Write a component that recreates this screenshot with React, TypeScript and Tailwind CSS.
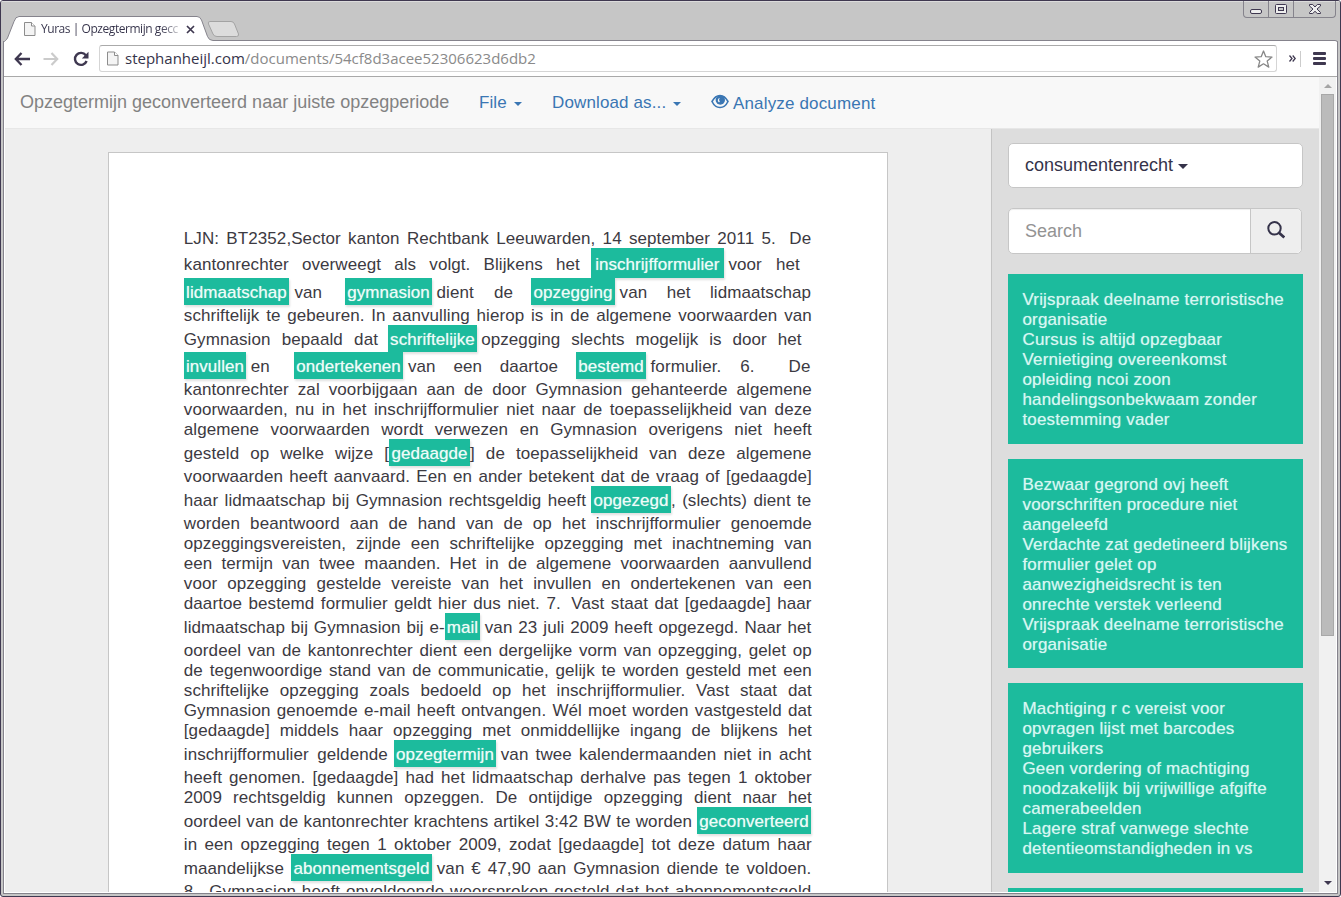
import React from "react";

type Segment = { gap?: number; width: number; text: string; mark?: boolean };
type Line = string | { height?: "tall" | "taller"; parts: Segment[] };

const FULL = 628;

const lines: Line[] = [
  { parts: [{ width: 592, text: "LJN: BT2352,Sector kanton Rechtbank Leeuwarden, 14 september 2011 5." }, { gap: 13.5, width: 23, text: "De" }] },
  { height: "taller", parts: [
    { width: 396, text: "kantonrechter overweegt als volgt. Blijkens het" },
    { gap: 11, width: 133, text: "inschrijfformulier", mark: true },
    { gap: 4.6, width: 71.4, text: "voor het" },
  ] },
  { height: "tall", parts: [
    { gap: 0.2, width: 105, text: "lidmaatschap", mark: true },
    { gap: 5.4, width: 28, text: "van" },
    { gap: 22.6, width: 87, text: "gymnasion", mark: true },
    { gap: 4.6, width: 76.4, text: "dient de" },
    { gap: 18, width: 84, text: "opzegging", mark: true },
    { gap: 4.6, width: 191.6, text: "van het lidmaatschap" },
  ] },
  "schriftelijk te gebeuren. In aanvulling hierop is in de algemene voorwaarden van",
  { height: "tall", parts: [
    { width: 194.2, text: "Gymnasion bepaald dat" },
    { gap: 10, width: 89, text: "schriftelijke", mark: true },
    { gap: 4.2, width: 320.4, text: "opzegging slechts mogelijk is door het" },
  ] },
  { height: "tall", parts: [
    { gap: 0.2, width: 62, text: "invullen", mark: true },
    { gap: 4.8, width: 20, text: "en" },
    { gap: 23.2, width: 109, text: "ondertekenen", mark: true },
    { gap: 5, width: 150, text: "van een daartoe" },
    { gap: 18, width: 70, text: "bestemd", mark: true },
    { gap: 4.6, width: 104, text: "formulier. 6." },
    { gap: 34, width: 23, text: "De" },
  ] },
  "kantonrechter zal voorbijgaan aan de door Gymnasion gehanteerde algemene",
  "voorwaarden, nu in het inschrijfformulier niet naar de toepasselijkheid van deze",
  "algemene voorwaarden wordt verwezen en Gymnasion overigens niet heeft",
  { height: "tall", parts: [
    { width: 205.2, text: "gesteld op welke wijze [" },
    { width: 81, text: "gedaagde", mark: true },
    { width: 341.6, text: "] de toepasselijkheid van deze algemene" },
  ] },
  "voorwaarden heeft aanvaard. Een en ander betekent dat de vraag of [gedaagde]",
  { height: "tall", parts: [
    { width: 402.2, text: "haar lidmaatschap bij Gymnasion rechtsgeldig heeft" },
    { gap: 5, width: 80, text: "opgezegd", mark: true },
    { width: 140.4, text: ", (slechts) dient te" },
  ] },
  "worden beantwoord aan de hand van de op het inschrijfformulier genoemde",
  "opzeggingsvereisten, zijnde een schriftelijke opzegging met inachtneming van",
  "een termijn van twee maanden. Het in de algemene voorwaarden aanvullend",
  "voor opzegging gestelde vereiste van het invullen en ondertekenen van een",
  { parts: [
    { width: 377, text: "daartoe bestemd formulier geldt hier dus niet. 7." },
    { gap: 10.5, width: 240.2, text: "Vast staat dat [gedaagde] haar" },
  ] },
  { height: "tall", parts: [
    { width: 261, text: "lidmaatschap bij Gymnasion bij e-" },
    { gap: 0.2, width: 35, text: "mail", mark: true },
    { gap: 4.8, width: 326.6, text: "van 23 juli 2009 heeft opgezegd. Naar het" },
  ] },
  "oordeel van de kantonrechter dient een dergelijke vorm van opzegging, gelet op",
  "de tegenwoordige stand van de communicatie, gelijk te worden gesteld met een",
  "schriftelijke opzegging zoals bedoeld op het inschrijfformulier. Vast staat dat",
  "Gymnasion genoemde e-mail heeft ontvangen. Wél moet worden vastgesteld dat",
  "[gedaagde] middels haar opzegging met onmiddellijke ingang de blijkens het",
  { height: "tall", parts: [
    { width: 204, text: "inschrijfformulier geldende" },
    { gap: 6.2, width: 102, text: "opzegtermijn", mark: true },
    { gap: 4.8, width: 310.6, text: "van twee kalendermaanden niet in acht" },
  ] },
  "heeft genomen. [gedaagde] had het lidmaatschap derhalve pas tegen 1 oktober",
  "2009 rechtsgeldig kunnen opzeggen. De ontijdige opzegging dient naar het",
  { height: "tall", parts: [
    { width: 508.2, text: "oordeel van de kantonrechter krachtens artikel 3:42 BW te worden" },
    { gap: 5, width: 114, text: "geconverteerd", mark: true },
  ] },
  "in een opzegging tegen 1 oktober 2009, zodat [gedaagde] tot deze datum haar",
  { height: "tall", parts: [
    { width: 101.2, text: "maandelijkse" },
    { gap: 6, width: 141, text: "abonnementsgeld", mark: true },
    { gap: 4.8, width: 374.6, text: "van € 47,90 aan Gymnasion diende te voldoen." },
  ] },
  { parts: [
    { width: 13, text: "8." },
    { gap: 12.5, width: 602, text: "Gymnasion heeft onvoldoende weersproken gesteld dat het abonnementsgeld" },
  ] },
];

const cards = [
  {
    height: 170,
    rows: ["Vrijspraak deelname terroristische", "organisatie", "Cursus is altijd opzegbaar", "Vernietiging overeenkomst", "opleiding ncoi zoon", "handelingsonbekwaam zonder", "toestemming vader"],
  },
  {
    height: 209,
    rows: ["Bezwaar gegrond ovj heeft", "voorschriften procedure niet", "aangeleefd", "Verdachte zat gedetineerd blijkens", "formulier gelet op", "aanwezigheidsrecht is ten", "onrechte verstek verleend", "Vrijspraak deelname terroristische", "organisatie"],
  },
  {
    height: 190,
    rows: ["Machtiging r c vereist voor", "opvragen lijst met barcodes", "gebruikers", "Geen vordering of machtiging", "noodzakelijk bij vrijwillige afgifte", "camerabeelden", "Lagere straf vanwege slechte", "detentieomstandigheden in vs"],
  },
  { height: 170, rows: [] },
];

function TextLine({ line }: { line: Line }) {
  const parts: Segment[] = typeof line === "string" ? [{ width: FULL, text: line }] : line.parts;
  const size = typeof line === "string" ? undefined : line.height;
  const box = size === "taller" ? "h-[30px] leading-[34px]" : size === "tall" ? "h-[27px] leading-[30px]" : "h-5 leading-[22px]";
  return (
    <div className={`flex shrink-0 whitespace-nowrap ${box}`}>
      {parts.map((p, i) => (
        <span
          key={i}
          className={
            p.mark
              ? "block shrink-0 bg-[#1cbb9d] text-center tracking-[0.05px] text-[#effcf8] shadow-[1px_2px_2px_rgba(0,0,0,0.12)] [text-shadow:0_0_1px_rgba(255,255,255,0.6)]"
              : "block shrink-0 [text-align-last:justify]"
          }
          style={{ width: p.width, marginLeft: p.gap ?? 0 }}
        >
          {p.text}
        </span>
      ))}
    </div>
  );
}

function PageIcon({ className }: { className: string }) {
  return (
    <svg className={className} viewBox="0 0 12 14" fill="none">
      <path d="M.5 .5h7L11 4v9.500H.5z" fill="#f4f4f4" stroke="#8d8d8d" />
      <path d="M7.500.5V4H11" fill="#fff" stroke="#8d8d8d" />
    </svg>
  );
}

function Caret({ className }: { className: string }) {
  return <span className={`inline-block border-x-4 border-t-4 border-x-transparent ${className}`} />;
}

function TitleBar() {
  return (
    <div className="relative flex h-10 shrink-0 border-t border-[#dcdcdc] bg-[#c6c6c6]">
      <svg className="absolute -top-px left-0" width="1339" height="41" viewBox="1 1 1339 41" fill="none">
        <path d="M4 42.500C4 41 6 41 7.500 38L14 21.500Q15.500 16.500 19 16.500H197Q200 16.500 201.500 20L207.500 36.500Q209 40.500 213 40.500H1335Q1337.500 40.500 1337.500 42.500V43H4z" fill="#fff" stroke="#85838c" />
        <path d="M210 21.500H231Q233.500 21.500 234.500 24L238.500 34Q239 36.500 236.500 36.500H217Q214 36.500 213 34L208.500 24Q207.500 21.500 210 21.500z" fill="#dcdcdc" stroke="#a3a3a3" />
      </svg>
      <div className="relative mt-[15px] ml-[23px] flex h-6 w-[176px] items-center">
        <PageIcon className="h-[14px] w-3 shrink-0" />
        <span className="ml-[5px] w-[140px] shrink-0 bg-gradient-to-r from-[#35334a] from-85% to-[#e4e4e4] bg-clip-text font-['Open_Sans','Noto_Sans',sans-serif] text-[12px] tracking-[-0.45px] whitespace-nowrap text-transparent">
          Yuras | Opzegtermijn gecc
        </span>
        <svg className="ml-[5px] h-[9px] w-[9px]" viewBox="0 0 9 9">
          <path d="M1 1l7 7M8 1L1 8" stroke="#3f3850" strokeWidth="1.700" />
        </svg>
      </div>
      <div className="relative -mt-px mr-[4px] ml-auto flex h-[17px] rounded-b-[4px] border-x border-b border-[#85838c]">
        <span className="flex w-[24px] items-center justify-center">
          <svg width="13" height="15" viewBox="0 0 13 15"><rect x=".5" y="7.500" width="11" height="4" rx="1.500" fill="#eee" stroke="#3f3850" /></svg>
        </span>
        <span className="flex w-[26px] items-center justify-center border-x border-[#85838c]">
          <svg width="13" height="11" viewBox="0 0 13 11" fill="none"><rect x=".5" y=".5" width="11" height="9" rx="1" fill="#eee" stroke="#3f3850" /><rect x="3.500" y="3.500" width="5" height="3" fill="#c6c6c6" stroke="#3f3850" /></svg>
        </span>
        <span className="flex w-[41px] items-center justify-center">
          <svg width="12" height="11" viewBox="0 0 12 11"><path d="M.5 .5h3.200L6 3 8.300 .5h3.200v1.500L8 5l3.500 3.500v1H8.300L6 7.300 3.700 9.500H.5v-1L4 5 .5 2z" fill="#eee" stroke="#3f3850" /></svg>
        </span>
      </div>
    </div>
  );
}

function Toolbar() {
  return (
    <div className="flex h-9 shrink-0 items-center border-b border-[#a9a9a9] bg-white">
      <svg className="ml-[10px] h-[14px] w-4" viewBox="0 0 16 14" fill="none" stroke="#3f3850" strokeWidth="2.300">
        <path d="M7.500 1L1.800 7l5.700 6M2 7h14" />
      </svg>
      <svg className="ml-[13px] h-[14px] w-4" viewBox="0 0 16 14" fill="none" stroke="#cbcbcb" strokeWidth="2.200">
        <path d="M8.500 1l5.700 6-5.700 6M14 7H.5" />
      </svg>
      <svg className="ml-[14px] h-4 w-4" viewBox="0 0 16 16" fill="none">
        <path d="M12.800 4.300A6 6 0 1 0 13.600 10" stroke="#3f3850" strokeWidth="2.400" />
        <path d="M15.500 .8v6.700H8.800z" fill="#3f3850" />
      </svg>
      <div className="ml-[10px] flex h-[27px] w-[1178px] items-center rounded-[3px] border border-[#d5d5d5] border-t-[#aaa]">
        <PageIcon className="ml-[7px] h-[15px] w-[12px]" />
        <span className="ml-[6px] font-['Open_Sans','Noto_Sans',sans-serif] text-[15px] whitespace-nowrap text-[#8a8a8a]">
          <span className="text-[#35334a]">stephanheijl.com</span>/documents/54cf8d3acee52306623d6db2
        </span>
        <svg className="mr-[3px] ml-auto h-[18px] w-[19px]" viewBox="0 0 19 18" fill="none" stroke="#888" strokeWidth="1.300">
          <path d="M9.500 1l2.300 5.700 6.200.4-4.800 4 1.600 6-5.300-3.300-5.300 3.300 1.600-6-4.800-4 6.200-.4z" strokeLinejoin="round" />
        </svg>
      </div>
      <svg className="ml-[12px] h-[7px] w-[7px]" viewBox="0 0 7 7" fill="none" stroke="#3f3850" strokeWidth="1.300">
        <path d="M.5 .5l2.500 3-2.500 3M3.700 .5l2.500 3-2.500 3" />
      </svg>
      <span className="ml-[4px] h-4 w-px bg-[#ccc]" />
      <span className="ml-[12px] flex w-[13px] flex-col gap-[2px]">
        <span className="h-[3px] rounded-[1px] bg-[#3f3850]" />
        <span className="h-[3px] rounded-[1px] bg-[#3f3850]" />
        <span className="h-[3px] rounded-[1px] bg-[#3f3850]" />
      </span>
    </div>
  );
}

function NavBar() {
  return (
    <nav className="flex h-[52px] shrink-0 border-b border-[#e7e7e7] bg-[#f8f8f8] text-[17px] leading-[50px] whitespace-nowrap text-[#3a76b3]">
      <span className="ml-[15px] w-[459px] text-[18px] text-[#828282]">Opzegtermijn geconverteerd naar juiste opzegperiode</span>
      <span className="flex w-[73px] items-center tracking-[0.1px]">File<Caret className="mt-[3px] ml-[7px] border-t-[#3a76b3]" /></span>
      <span className="flex w-[159px] items-center tracking-[0.13px]">Download as...<Caret className="mt-[3px] ml-[7px] border-t-[#3a76b3]" /></span>
      <span className="flex items-center pt-[2px] tracking-[0.16px]">
        <svg className="mt-[-4px] mr-[4px] h-[15px] w-[18px]" viewBox="0 0 18 15" fill="none">
          <path d="M1 7.500C3 3.800 5.700 1.500 9 1.500s6 2.300 8 6C15 11.600 12 13.500 9 13.500S3 11.600 1 7.500z" stroke="#3a76b3" strokeWidth="1.600" />
          <circle cx="9.300" cy="6" r="4.700" fill="#3a76b3" />
          <path d="M8.300 4C6.700 4.800 6.400 6.800 7.500 7.900c.9.600 1.500.1 1.200-.6-.8-1-.8-2-.1-2.800z" fill="#f8f8f8" />
        </svg>
        Analyze document
      </span>
    </nav>
  );
}

function Sidebar() {
  return (
    <aside className="flex w-[328px] shrink-0 flex-col overflow-hidden border-l border-[#c3c3c3] bg-[#ddd] pt-[14px] pl-4">
      <div className="flex h-[45px] w-[295px] shrink-0 items-center rounded-[5px] border border-[#c6c6c6] bg-white pl-4 text-[18px] text-[#35334a]">
        consumentenrecht
        <Caret className="mt-px ml-[5px] border-x-[5px] border-t-[5px] border-t-[#35334a]" />
      </div>
      <div className="mt-5 flex h-[46px] w-[294px] shrink-0 rounded-[5px] border border-[#c6c6c6] bg-white text-[18px] leading-[44px] text-[#939393] shadow-[inset_0_1px_1px_rgba(0,0,0,0.07)]">
        <span className="flex-1 pl-4">Search</span>
        <span className="flex w-[51px] justify-center rounded-r-[5px] border-l border-[#c6c6c6] bg-[#eee] pt-[12px]">
          <svg width="18" height="18" viewBox="0 0 18 18" fill="none" stroke="#35334a">
            <circle cx="7.500" cy="7.300" r="6.200" strokeWidth="2" />
            <path d="M12 11.800L17.300 16.500" strokeWidth="2.800" />
          </svg>
        </span>
      </div>
      <div className="mt-5 flex flex-col gap-[15px]">
        {cards.map((c, i) => (
          <div
            key={i}
            className="w-[295px] shrink-0 bg-[#1cbb9d] pt-4 pl-[14.500px] text-[17px] leading-5 tracking-[0.15px] whitespace-nowrap text-[#d8f7f2] [text-shadow:0_0_1px_rgba(216,247,242,0.6)]"
            style={{ height: c.height }}
          >
            {c.rows.map((r) => <div key={r}>{r}</div>)}
          </div>
        ))}
      </div>
    </aside>
  );
}

function ScrollBar() {
  return (
    <div className="flex w-[18px] shrink-0 flex-col items-center border-r border-white bg-[#f1f1f1] pt-[7px]">
      <span className="border-x-4 border-b-4 border-x-transparent border-b-[#a5a5a5]" />
      <span className="mt-[6px] h-[542px] w-[13px] border border-[#a8a8a8] bg-[#bbb]" />
      <span className="mt-auto mb-[7px] border-x-4 border-t-4 border-x-transparent border-t-[#3f3850]" />
    </div>
  );
}

export default function App() {
  return (
    <div className="flex h-[897px] w-[1341px] flex-col overflow-hidden rounded-[3px] border border-[#3f3850] bg-[#c6c6c6] font-['Liberation_Sans',Arial,sans-serif]">
      <TitleBar />
      <div className="mx-[2px] mb-[2px] flex min-h-0 flex-1 flex-col border-x border-b border-[#85838c] bg-white">
        <Toolbar />
        <div className="ml-px flex min-h-0 flex-1 pb-px">
          <div className="flex w-[1314px] shrink-0 flex-col">
            <NavBar />
            <div className="flex min-h-0 flex-1">
              <main className="min-w-0 flex-1 overflow-hidden bg-[#eee] pt-[23px] pl-[103px]">
                <article className="flex h-[900px] w-[780px] flex-col border border-[#c6c6c6] bg-white pt-[75px] pl-[74.800px] text-[17px] tracking-[0.08px] text-[#3c3a42]">
                  {lines.map((l, i) => <TextLine key={i} line={l} />)}
                </article>
              </main>
              <Sidebar />
            </div>
          </div>
          <ScrollBar />
        </div>
      </div>
    </div>
  );
}
